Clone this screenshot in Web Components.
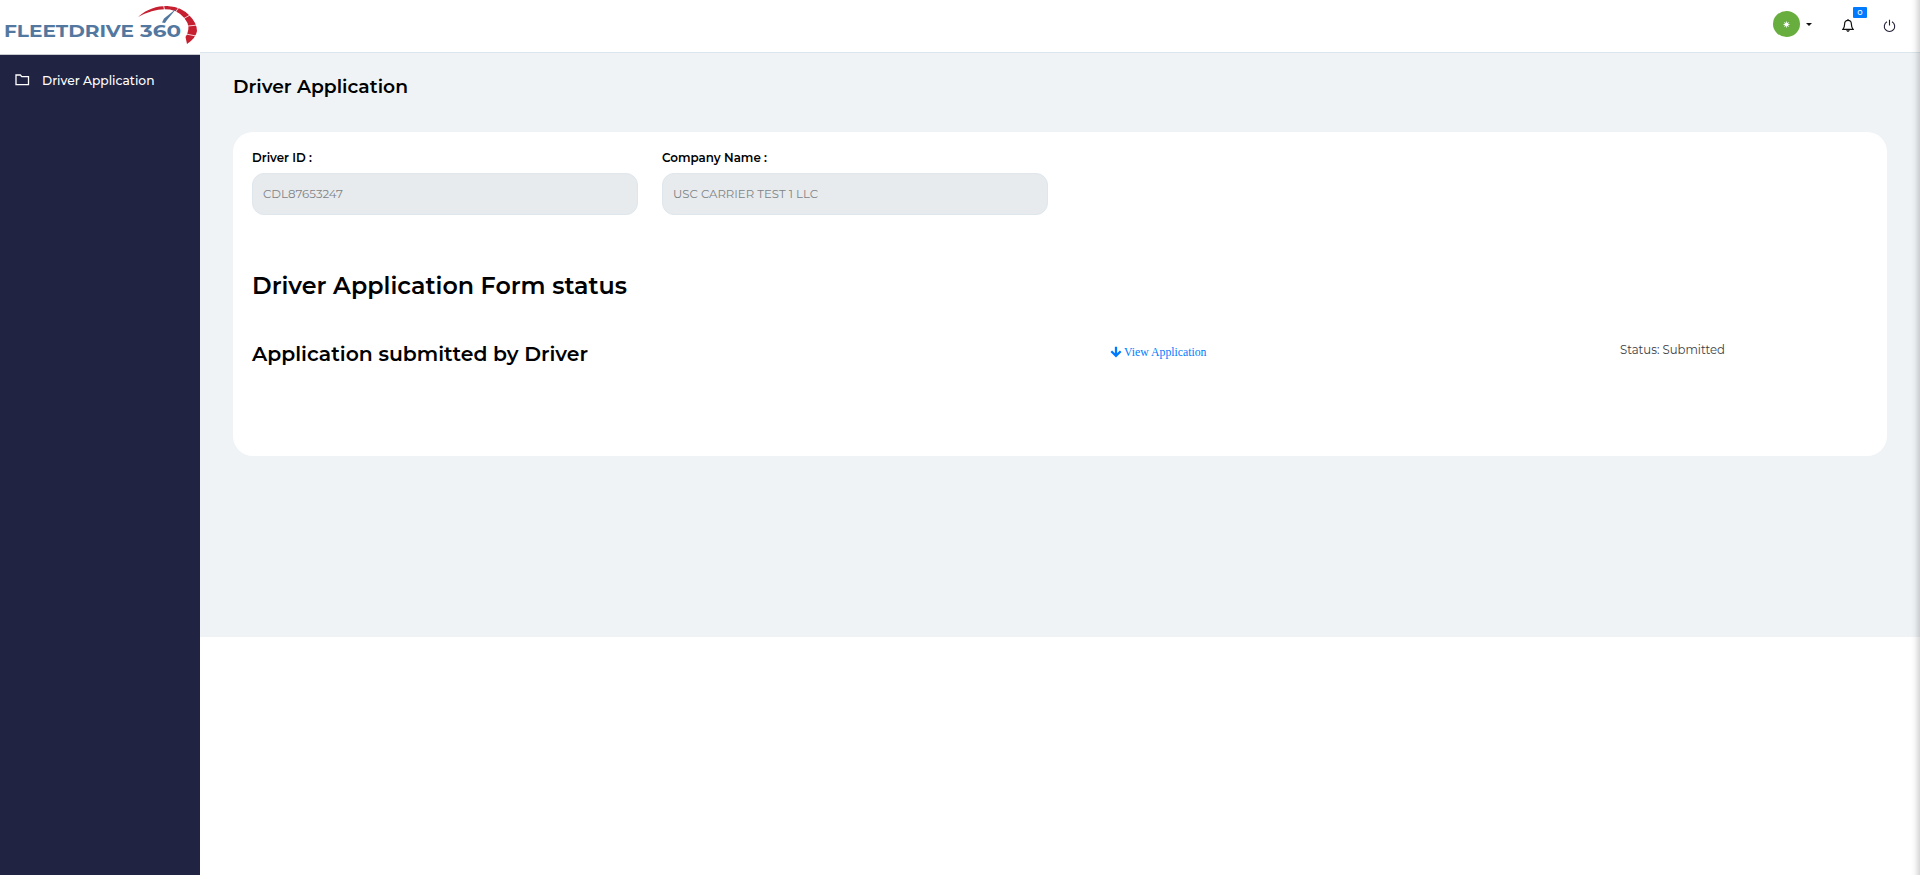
<!DOCTYPE html>
<html lang="en"><head><meta charset="utf-8"><title>Driver Application</title>
<style>body{margin:0;background:#fff;font-family:Montserrat,Inter,"Open Sans",sans-serif;overflow:hidden}</style></head><body>
<fleet-app></fleet-app>
<script>
const define=(name,html,Base=HTMLElement)=>{const t=document.createElement('template');t.innerHTML=html;
customElements.define(name,class extends Base{constructor(){super();this.attachShadow({mode:'open'}).append(t.content.cloneNode(true));}});};

/* A single line of text stretched horizontally to the width given in its "w" attribute. */
class FitText extends HTMLElement{
 constructor(){super();this.attachShadow({mode:'open'}).innerHTML='<style>:host{display:block;white-space:nowrap}span{display:inline-block;transform-origin:0 50%}</style><span><slot></slot></span>';}
 connectedCallback(){const w=+this.getAttribute('w'),s=this.shadowRoot.querySelector('span');this.style.width=w+'px';
  const n=s.getBoundingClientRect().width;if(n)s.style.transform=`scaleX(${w/n})`;}
}
customElements.define('fit-text',FitText);

define('fleet-logo',`<style>:host{display:block;width:200px;background:#fff;border-bottom:1px solid #c9cbd0;box-sizing:border-box;height:55px}svg{display:block}
text{font:700 16px Montserrat,Inter,sans-serif;fill:#53789f}</style>
<svg width="200" height="54" viewBox="0 0 200 54">
<text x="4" y="36.500" textLength="130" lengthAdjust="spacingAndGlyphs">FLEETDRIVE</text><text x="140" y="36.500" textLength="41" lengthAdjust="spacingAndGlyphs">360</text>
<path d="M138 17C148 8 160 5.500 169 6.200Q181 7 189 15Q197 23 197 31Q196 38 187 44L185.500 37Q190 30 187.500 23Q182 12 170 9.500Q155 7.500 138 17Z" fill="#c51f30"/>
<path d="M163.500 5L164.500 10M179 7L175 13M190 15L183 19M198 25L188 26M196 36L186 34" stroke="#fff" stroke-width=".8"/>
<path d="M176.500 8.500L167 20L165 23L162 22.500L164 18.500Z" fill="#53789f"/></svg>`);

define('side-bar',`<style>:host{display:flex;flex-direction:column;background:#202342;color:#fff}
nav{display:flex;align-items:center;gap:12px;padding:15px 0 0 15px;height:20px;font-size:13px;font-weight:500}</style>
<fleet-logo></fleet-logo><nav><svg width="15" height="12" viewBox="0 0 15 12" fill="none" stroke="#fff" stroke-width="1.300"><path d="M1 1h4.300l1.500 1.700H13.500V10.700H1Z"/></svg><fit-text w="112.5">Driver Application</fit-text></nav>`);

define('top-bar',`<style>:host{display:flex;justify-content:flex-end;align-items:flex-start;height:52px;background:#fff;border-bottom:1px solid #dbe5ed}
.av{width:27px;height:26px;border-radius:50%;background:#67ae3e;margin-top:11px;display:grid;place-items:center}
.caret{border:3px solid transparent;border-top-color:#111;border-bottom:0;margin:23px 30px 0 6px}
.bell{position:relative;margin:19px 29px 0 0;height:14px}.power{margin:19px 24px 0 0}
.badge{position:absolute;left:11px;top:-12px;width:14px;height:11px;background:#007bff;border-radius:1px;color:#fff;font-size:8px;font-weight:500;line-height:10px;text-align:center}svg{display:block}</style>
<div class="av"><svg width="7" height="7" viewBox="0 0 7 7" stroke="#fff" stroke-width="1"><circle cx="3.500" cy="3.500" r="2.100" fill="#fff" stroke="none"/><path d="M3.500 .3v6.400M.3 3.500h6.400M1.200 1.200l4.600 4.600M5.800 1.200l-4.600 4.600" stroke-opacity=".65"/></svg></div>
<div class="caret"></div>
<div class="bell"><svg width="12" height="14" viewBox="0 0 12 14" fill="none" stroke="#111" stroke-width="1.200"><path d="M6 1.300C3.600 1.300 2.600 3 2.600 5.200C2.600 8 2 9 .9 10.400H11.100C10 9 9.400 8 9.400 5.200C9.400 3 8.400 1.300 6 1.300ZM6 0v1.300M4.800 10.800Q5 12.400 6 12.400T7.200 10.800"/></svg><div class="badge">0</div></div>
<svg class="power" width="13" height="14" viewBox="0 0 13 14" fill="none" stroke="#222036" stroke-width="1.100"><path d="M4 2.700A5.200 5.200 0 1 0 9 2.700M6.500 .8V6.500"/></svg>`);

define('form-field',`<style>:host{display:block;width:385.500px}.l{font-weight:600;font-size:12px;line-height:16px;color:#000;padding-top:1px}
.i{box-sizing:border-box;height:42px;margin-top:7px;border:1px solid #dfe6ec;border-radius:12px;background:#e7ebee;color:#7f8387;font-size:12px;font-weight:400;padding:0 10px 1px;display:flex;align-items:center}</style><div class="l"><slot name="label"></slot></div><div class="i"><slot></slot></div>`);

define('view-link',`<style>:host{display:flex;align-items:center;gap:2px;color:#007bff;font:12px/16px "Liberation Serif",serif}</style>
<svg width="12" height="12" viewBox="0 0 12 12" fill="none" stroke="#007bff" stroke-width="2.300"><path d="M6 .8V10M1.300 5.300L6 9.900L10.700 5.300"/></svg><fit-text w="82.5">View Application</fit-text>`);

define('status-card',`<style>:host{display:block;box-sizing:border-box;height:324px;background:#fff;border-radius:20px;padding:17px 19px;color:#000}
.f{display:flex;gap:24.500px}.h{font-weight:600;font-size:24px;line-height:30px;margin-top:56px}
.r{display:grid;grid-template-columns:858px 510px auto;margin-top:38px;align-items:start}.a{font-weight:600;font-size:20px;line-height:30px}view-link{margin-top:5px}.s{font-size:12.500px;font-weight:400;line-height:16px;margin-top:3px;color:#3c4045}</style>
<div class="f"><form-field><fit-text slot="label" w="60">Driver ID :</fit-text><fit-text w="80">CDL87653247</fit-text></form-field>
<form-field><fit-text slot="label" w="105">Company Name :</fit-text><fit-text w="145">USC CARRIER TEST 1 LLC</fit-text></form-field></div>
<div class="h"><fit-text w="375">Driver Application Form status</fit-text></div>
<div class="r"><fit-text class="a" w="336">Application submitted by Driver</fit-text><view-link></view-link><fit-text class="s" w="105">Status: Submitted</fit-text></div>`);

define('page-body',`<style>:host{display:block;box-sizing:border-box;height:584px;background:#eff3f6;padding:22px 33px 0}
h1{margin:0 0 32px;font-size:18px;line-height:25px;font-weight:600;color:#000}</style><h1><fit-text w="175">Driver Application</fit-text></h1><status-card></status-card>`);

define('fleet-app',`<style>:host{display:grid;grid-template-columns:200px 1fr;height:875px;position:relative}
.edge{position:absolute;right:0;top:0;width:9px;height:100%;background:linear-gradient(90deg,#0000,#00000008 40%,#00000028)}</style><side-bar></side-bar><main><top-bar></top-bar><page-body></page-body></main><div class="edge"></div>`);
</script></body></html>
